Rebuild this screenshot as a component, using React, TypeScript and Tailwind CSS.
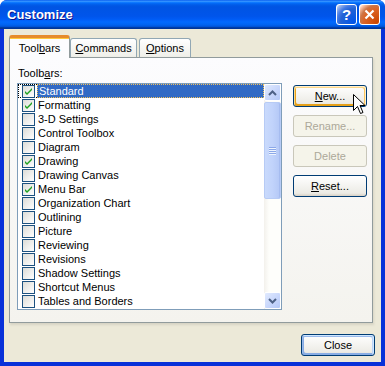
import React from 'react';

type Item = { name: string; checked?: boolean; selected?: boolean };

const items: Item[] = [
  { name: 'Standard', checked: true, selected: true },
  { name: 'Formatting', checked: true },
  { name: '3-D Settings' },
  { name: 'Control Toolbox' },
  { name: 'Diagram' },
  { name: 'Drawing', checked: true },
  { name: 'Drawing Canvas' },
  { name: 'Menu Bar', checked: true },
  { name: 'Organization Chart' },
  { name: 'Outlining' },
  { name: 'Picture' },
  { name: 'Reviewing' },
  { name: 'Revisions' },
  { name: 'Shadow Settings' },
  { name: 'Shortcut Menus' },
  { name: 'Tables and Borders' },
];

const font = { fontFamily: '"Liberation Sans", Arial, sans-serif' };

function CheckBox({ checked }: { checked?: boolean }) {
  return (
    <div className="w-[13px] h-[13px] shrink-0 border border-[#1C5180] bg-[linear-gradient(135deg,#DCDCD7_0%,#FFFFFF_100%)] flex items-center justify-center">
      {checked && (
        <svg width="9" height="9" viewBox="0 0 9 9">
          <path d="M1 4 L3 6 L8 1 L8 3 L3 8 L1 6 Z" fill="#21A121" />
        </svg>
      )}
    </div>
  );
}

function Row({ item }: { item: Item }) {
  if (item.selected) {
    return (
      <div className="h-[14px] flex items-center">
        <div className="h-[14px] pl-[3px] pr-[2px] flex items-center border border-r-0 border-dotted border-black">
          <CheckBox checked={item.checked} />
        </div>
        <div className="h-[14px] flex-1 bg-[#316AC5] text-white pl-[1px] leading-[12px] border border-dotted border-[#F2C25C]">
          {item.name}
        </div>
      </div>
    );
  }
  return (
    <div className="h-[14px] flex items-center pl-[4px] gap-[3px]">
      <CheckBox checked={item.checked} />
      <span className="leading-[14px]">{item.name}</span>
    </div>
  );
}

function ScrollButton({ down }: { down?: boolean }) {
  return (
    <div className="h-[17px] w-[17px] rounded-[2px] border border-white bg-[linear-gradient(135deg,#E1EAFE_0%,#C6D5FB_60%,#B4C8F6_100%)] flex items-center justify-center">
      <svg width="9" height="6" viewBox="0 0 9 6">
        <path
          d={down ? 'M1 1 L4.5 4.5 L8 1' : 'M1 5 L4.5 1.5 L8 5'}
          fill="none"
          stroke="#4D6185"
          strokeWidth="2"
        />
      </svg>
    </div>
  );
}

function XpButton({
  children,
  disabled,
  hover,
  primary,
}: {
  children: React.ReactNode;
  disabled?: boolean;
  hover?: boolean;
  primary?: boolean;
}) {
  let cls =
    'w-[74px] h-[22px] rounded-[3px] border flex items-center justify-center text-[11px] ';
  if (disabled) {
    cls += 'border-[#C9C7BA] text-[#ACA899] bg-[#F5F4EA]';
  } else if (hover) {
    cls +=
      'border-[#003C74] text-black bg-[linear-gradient(180deg,#FFFFFF,#ECEBE5_86%,#D8D0C4)] shadow-[inset_-1px_1px_#FFF0CF,inset_1px_2px_#FDD889,inset_-2px_2px_#FBC761,inset_2px_-2px_#E5A01A]';
  } else if (primary) {
    cls +=
      'border-[#003C74] text-black bg-[linear-gradient(180deg,#FFFFFF,#ECEBE5_86%,#D8D0C4)] shadow-[inset_-1px_1px_#CEE7FF,inset_1px_2px_#98B8EA,inset_-2px_2px_#BCD4F6,inset_1px_-1px_#89ADE4,inset_2px_-2px_#89ADE4]';
  } else {
    cls +=
      'border-[#003C74] text-black bg-[linear-gradient(180deg,#FFFFFF,#ECEBE5_86%,#D8D0C4)]';
  }
  return <div className={cls}>{children}</div>;
}

export default function App() {
  return (
    <div
      className="w-[385px] h-[366px] flex flex-col bg-[#0831D9] rounded-t-[7px] overflow-hidden relative select-none"
      style={font}
    >
      {/* Title bar */}
      <div className="h-[29px] shrink-0 flex items-center pl-[7px] pr-[5px] bg-[linear-gradient(180deg,#0058EE_0%,#3A93FF_4%,#288EFF_6%,#127DFF_8%,#036FFC_10%,#0262EE_14%,#0057E5_20%,#0054E3_24%,#0055EB_56%,#005BF5_66%,#026AFE_76%,#0062EF_86%,#0052D6_92%,#0040AB_94%,#003092_100%)]">
        <span className="text-white font-bold text-[13px] [text-shadow:1px_1px_#0F1089] flex-1">
          Customize
        </span>
        <div className="flex gap-[2px]">
          <div className="w-[21px] h-[21px] rounded-[3px] border border-white bg-[radial-gradient(circle_at_90%_90%,#0054E9_0%,#2263D5_55%,#4479E4_70%,#A3BBEC_90%,#FFFFFF_100%)] flex items-center justify-center text-white font-bold text-[15px] leading-none">
            ?
          </div>
          <div className="w-[21px] h-[21px] rounded-[3px] border border-white bg-[radial-gradient(circle_at_90%_90%,#CC4600_0%,#DC6527_55%,#CD7546_70%,#FFCCB2_90%,#FFFFFF_100%)] flex items-center justify-center">
            <svg width="11" height="11" viewBox="0 0 11 11">
              <path d="M1.5 1.5 L9.5 9.5 M9.5 1.5 L1.5 9.5" stroke="white" strokeWidth="2.2" />
            </svg>
          </div>
        </div>
      </div>

      {/* Client area */}
      <div className="flex-1 mx-[4px] mb-[4px] bg-[#ECE9D8] flex flex-col pl-[5px] pr-[6px] pt-[6px] text-[11px] text-black">
        {/* Tabs */}
        <div className="h-[22px] flex items-end">
          <div className="relative z-10 -mb-px w-[61px] h-[23px] rounded-t-[3px] border border-b-0 border-[#919B9C] border-t-[3px] border-t-[#E68B2C] bg-[#FCFCFE] shadow-[inset_0_1px_#FFC83C] flex items-center justify-center">
            Tool<u>b</u>ars
          </div>
          <div className="w-[67px] h-[19px] rounded-t-[3px] border border-b-0 border-[#91A7B4] bg-[linear-gradient(180deg,#FFFFFF,#FAFAF9_26%,#F0F0EA_95%,#ECEBE5)] flex items-center justify-center">
            <u>C</u>ommands
          </div>
          <div className="ml-[2px] w-[52px] h-[19px] rounded-t-[3px] border border-b-0 border-[#91A7B4] bg-[linear-gradient(180deg,#FFFFFF,#FAFAF9_26%,#F0F0EA_95%,#ECEBE5)] flex items-center justify-center">
            <u>O</u>ptions
          </div>
        </div>

        {/* Tab panel */}
        <div className="mr-[2px] h-[266px] border border-[#919B9C] bg-[linear-gradient(180deg,#FCFCFE,#F4F3EE)] shadow-[1px_2px_2px_0_rgba(208,206,191,0.75)] flex pl-[7px]">
          <div className="flex flex-col">
            <div className="mt-[9px] mb-[3px] ml-[1px] leading-[13px]">
              Toolb<u>a</u>rs:
            </div>
            <div className="w-[265px] h-[227px] border border-[#7F9DB9] bg-white flex">
              <div className="flex-1 flex flex-col">
                {items.map((it) => (
                  <Row key={it.name} item={it} />
                ))}
              </div>
              <div className="w-[17px] flex flex-col bg-[linear-gradient(90deg,#F3F1EC,#FEFEFB_30%,#FEFEFB)]">
                <ScrollButton />
                <div className="flex-1 flex flex-col pt-[1px]">
                  <div className="h-[97px] rounded-[2px] border border-[#B7CBF5] bg-[linear-gradient(90deg,#C9DAFC,#C1D3FB_50%,#B4C8F6)] shadow-[inset_-1px_0_#A6BCF0] flex flex-col items-center justify-center gap-[1px]">
                    {[0, 1, 2, 3].map((i) => (
                      <div key={i} className="w-[7px] h-[1px] bg-[#8CA8E8] shadow-[0_1px_#EEF4FE]" />
                    ))}
                  </div>
                </div>
                <ScrollButton down />
              </div>
            </div>
          </div>

          <div className="ml-[11px] mt-[27px] flex flex-col gap-[8px]">
            <XpButton hover>
              <span>
                <u>N</u>ew...
              </span>
            </XpButton>
            <XpButton disabled>Rename...</XpButton>
            <XpButton disabled>Delete</XpButton>
            <XpButton>
              <span>
                <u>R</u>eset...
              </span>
            </XpButton>
          </div>
        </div>

        {/* Bottom buttons */}
        <div className="mt-[11px] flex justify-end">
          <XpButton primary>Close</XpButton>
        </div>
      </div>

      {/* Mouse cursor over New... */}
      <svg
        className="absolute left-[353px] top-[94px]"
        width="13"
        height="21"
        viewBox="0 0 13 21"
      >
        <path
          d="M0.5 0.5 L0.5 16.5 L4.5 12.5 L7.5 19.5 L10 18.5 L7 11.5 L12 11.5 Z"
          fill="white"
          stroke="black"
          strokeWidth="1"
          strokeLinejoin="miter"
        />
      </svg>
    </div>
  );
}
